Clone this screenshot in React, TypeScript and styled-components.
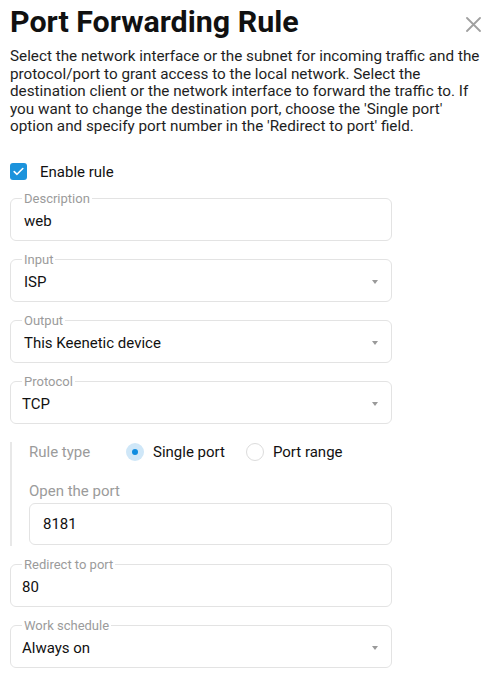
import React from "react";
import styled, { createGlobalStyle } from "styled-components";

const Global = createGlobalStyle`
  html, body { margin: 0; padding: 0; background: #fff; }
  body { font-family: Roboto, "Noto Sans", Arial, sans-serif; color: #1a1a1a; }
  * { box-sizing: border-box; }
`;

const Page = styled.div`
  width: 495px;
  padding: 4px 10px 0 10px;
`;

const Header = styled.div`
  display: flex;
  justify-content: space-between;
  align-items: flex-start;
`;

const Title = styled.h1`
  margin: 0;
  font-size: 30.4px;
  line-height: 36px;
  font-weight: 700;
  color: #111;
`;

const CloseButton = styled.button`
  border: 0;
  background: none;
  padding: 0;
  margin: 12px 4px 0 0;
  width: 16px;
  height: 16px;
  display: flex;
  align-items: center;
  justify-content: center;
  cursor: pointer;
`;

const Intro = styled.p`
  margin: 8px 0 0 0;
  font-size: 15.25px;
  line-height: 17.5px;
  color: #1e1e1e;
`;

const CheckRow = styled.label`
  display: flex;
  align-items: center;
  gap: 13px;
  margin-top: 27px;
  height: 18px;
  font-size: 15px;
  color: #111;
`;

const CheckBox = styled.span`
  width: 17px;
  height: 17px;
  border-radius: 3px;
  background: #1c93dc;
  display: flex;
  align-items: center;
  justify-content: center;
`;

const Field = styled.fieldset<{ $first?: boolean }>`
  margin: ${(p) => (p.$first ? "11px" : "12px")} 0 0 0;
  width: 382px;
  border: 1px solid #e3e3e3;
  border-radius: 6px;
  padding: 5px 14px 9px 13px;
  min-width: 0;
`;

const Legend = styled.legend`
  font-size: 13px;
  line-height: 14px;
  color: #9b9b9b;
  padding: 0 2px;
  margin-left: -2px;
`;

const Value = styled.div<{ $tight?: boolean }>`
  display: flex;
  align-items: center;
  justify-content: space-between;
  font-size: 15px;
  line-height: 20px;
  color: #111;
  margin-left: ${(p) => (p.$tight ? "-2px" : "0")};
`;

const Caret = styled.span`
  width: 0;
  height: 0;
  border-left: 3.5px solid transparent;
  border-right: 3.5px solid transparent;
  border-top: 4px solid #9a9a9a;
  margin-right: -1px;
`;

const Group = styled.div`
  margin-top: 18px;
  border-left: 2px solid #e8e8e8;
  padding-left: 17px;
  padding-bottom: 1px;
`;

const RadioRow = styled.div`
  display: flex;
  align-items: center;
  height: 20px;
  font-size: 15px;
`;

const GroupLabel = styled.span`
  width: 97px;
  color: #9b9b9b;
`;

const RadioOption = styled.label`
  display: flex;
  align-items: center;
  gap: 9px;
  margin-right: 21px;
  color: #111;
`;

const RadioCircle = styled.span<{ $on?: boolean }>`
  width: 18px;
  height: 18px;
  border-radius: 50%;
  background: ${(p) => (p.$on ? "#cfe7f8" : "#fff")};
  border: ${(p) => (p.$on ? "none" : "1px solid #dcdcdc")};
  display: flex;
  align-items: center;
  justify-content: center;
  &::after {
    content: "";
    display: ${(p) => (p.$on ? "block" : "none")};
    width: 6px;
    height: 6px;
    border-radius: 50%;
    background: #0e8ce0;
  }
`;

const PlainLabel = styled.div`
  margin-top: 19px;
  font-size: 15px;
  line-height: 20px;
  color: #9b9b9b;
`;

const PlainBox = styled.div`
  margin-top: 2px;
  width: 363px;
  height: 42px;
  border: 1px solid #e3e3e3;
  border-radius: 6px;
  padding-left: 13px;
  display: flex;
  align-items: center;
  font-size: 15px;
  color: #111;
`;

const Select = ({ label, value, tight, first }: { label: string; value: string; tight?: boolean; first?: boolean }) => (
  <Field $first={first}>
    <Legend>{label}</Legend>
    <Value $tight={tight}>
      <span>{value}</span>
      <Caret />
    </Value>
  </Field>
);

const TextField = ({ label, value, tight, first }: { label: string; value: string; tight?: boolean; first?: boolean }) => (
  <Field $first={first}>
    <Legend>{label}</Legend>
    <Value $tight={tight}>
      <span>{value}</span>
    </Value>
  </Field>
);

export default function App() {
  return (
    <Page>
      <Global />
      <Header>
        <Title>Port Forwarding Rule</Title>
        <CloseButton aria-label="close">
          <svg width="15" height="15" viewBox="0 0 15 15">
            <path d="M1 1 L14 14 M14 1 L1 14" stroke="#a0a0a0" strokeWidth="1.8" strokeLinecap="round" />
          </svg>
        </CloseButton>
      </Header>
      <Intro>
        Select the network interface or the subnet for incoming traffic and the protocol/port to grant access to the
        local network. Select the destination client or the network interface to forward the traffic to. If you want
        to change the destination port, choose the 'Single port' option and specify port number in the 'Redirect to
        port' field.
      </Intro>
      <CheckRow>
        <CheckBox>
          <svg width="11" height="9" viewBox="0 0 11 9">
            <path d="M1.2 4.6 L4 7.3 L9.8 1.5" fill="none" stroke="#fff" strokeWidth="1.6" strokeLinecap="round" strokeLinejoin="round" />
          </svg>
        </CheckBox>
        Enable rule
      </CheckRow>
      <TextField first label="Description" value="web" />
      <Select label="Input" value="ISP" />
      <Select label="Output" value="This Keenetic device" />
      <Select label="Protocol" value="TCP" tight />
      <Group>
        <RadioRow>
          <GroupLabel>Rule type</GroupLabel>
          <RadioOption>
            <RadioCircle $on />
            Single port
          </RadioOption>
          <RadioOption>
            <RadioCircle />
            Port range
          </RadioOption>
        </RadioRow>
        <PlainLabel>Open the port</PlainLabel>
        <PlainBox>8181</PlainBox>
      </Group>
      <TextField label="Redirect to port" value="80" tight />
      <Select label="Work schedule" value="Always on" tight />
    </Page>
  );
}
